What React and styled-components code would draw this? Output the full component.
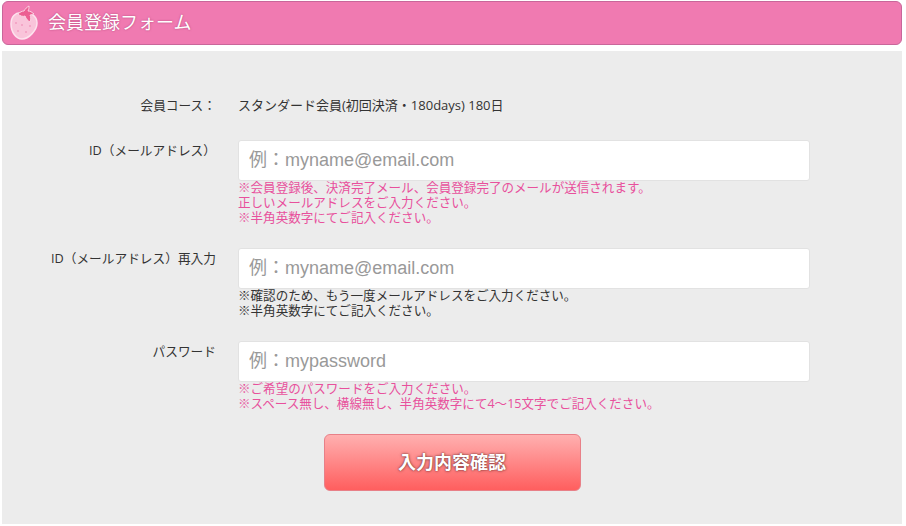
import React from "react";
import styled, { createGlobalStyle } from "styled-components";

const Global = createGlobalStyle`
  html, body { margin: 0; padding: 0; background: #fff; }
  body { font-family: "Open Sans", "Noto Sans CJK JP", sans-serif; color: #333; }
  * { box-sizing: border-box; }
`;

const Page = styled.div`
  width: 906px;
  height: 526px;
  padding: 1px 4px 0 2px;
  overflow: hidden;
`;

const Header = styled.h1`
  display: flex;
  align-items: center;
  gap: 8px;
  height: 44px;
  margin: 0;
  padding-left: 5px;
  background: #f07ab1;
  border: 1px solid #c9669a;
  border-radius: 6px;
  color: #fff;
  font-size: 18px;
  font-weight: 400;
  text-shadow: 0 0 2px rgba(130, 30, 80, 0.6);
`;

const Title = styled.span`
  padding-bottom: 4px;
`;

const Panel = styled.div`
  margin-top: 6px;
  height: 473px;
  padding-top: 45px;
  background: #ececec;
`;

const Row = styled.div`
  display: grid;
  grid-template-columns: 214px 572px;
  column-gap: 22px;
  margin-bottom: ${(p) => p.$gap}px;
`;

const Label = styled.div`
  font-size: 12.7px;
  line-height: 18px;
  text-align: right;
  padding-top: ${(p) => p.$top || 0}px;
`;

const Value = styled.div`
  font-size: 13px;
  line-height: 18px;
`;

const Input = styled.input`
  display: block;
  width: 572px;
  height: 41px;
  padding: 0 10px;
  background: #fff;
  border: 1px solid #e2e2e2;
  border-radius: 3px;
  outline: none;
  font-family: "Liberation Sans", "Noto Sans CJK JP", sans-serif;
  font-size: 18px;
  &::placeholder { color: #999; opacity: 1; }
`;

const Hint = styled.div`
  margin-top: -1px;
  font-size: 12.55px;
  line-height: 15px;
  color: ${(p) => (p.$dark ? "#333" : "#e8509c")};
`;

const Actions = styled.div`
  display: flex;
  justify-content: center;
`;

const Submit = styled.button`
  width: 257px;
  height: 57px;
  padding: 0 0 3px;
  background: linear-gradient(#ffb0b0, #ff5e5e);
  border: 1px solid #e88088;
  border-radius: 6px;
  color: #fff;
  font-family: "Noto Sans CJK JP", sans-serif;
  font-size: 18px;
  font-weight: 700;
  text-shadow: 0 0 3px #7a3535, 0 0 1px #7a3535;
`;

const Strawberry = () => (
  <svg width="32" height="36" viewBox="0 0 32 36">
    <path d="M14 8C7 7 3 12 3 19c0 8 5 15 11 15 7 0 15-9 15-16 0-7-7-12-15-10z" fill="#f9c4da" stroke="#fde3ee" strokeWidth="1.5" />
    <path d="M10 9c2-2 4-3 6-3 1-2 3-4 5-5 0 2 0 3-1 5 2 0 4 1 6 3-2 0-3 1-4 1 1 2 1 4 0 7-2-1-4-3-5-6-2 1-5 0-7-2z" fill="#ec5f92" stroke="#fbd3e3" strokeWidth="1" />
    <g fill="#f29cc0">
      <circle cx="8" cy="18" r="1" />
      <circle cx="14" cy="20" r="1" />
      <circle cx="22" cy="21" r="1" />
      <circle cx="10" cy="26" r="1" />
      <circle cx="18" cy="27" r="1" />
    </g>
  </svg>
);

export default function App() {
  return (
    <Page>
      <Global />
      <Header>
        <Strawberry />
        <Title>会員登録フォーム</Title>
      </Header>
      <Panel>
        <Row $gap={26}>
          <Label>会員コース：</Label>
          <Value>スタンダード会員(初回決済・180days) 180日</Value>
        </Row>
        <Row $gap={23}>
          <Label $top={1}>ID（メールアドレス）</Label>
          <div>
            <Input placeholder="例：myname@email.com" />
            <Hint>
              ※会員登録後、決済完了メール、会員登録完了のメールが送信されます。
              <br />
              正しいメールアドレスをご入力ください。
              <br />
              ※半角英数字にてご記入ください。
            </Hint>
          </div>
        </Row>
        <Row $gap={23}>
          <Label $top={1}>ID（メールアドレス）再入力</Label>
          <div>
            <Input placeholder="例：myname@email.com" />
            <Hint $dark>
              ※確認のため、もう一度メールアドレスをご入力ください。
              <br />
              ※半角英数字にてご記入ください。
            </Hint>
          </div>
        </Row>
        <Row $gap={23}>
          <Label $top={1}>パスワード</Label>
          <div>
            <Input placeholder="例：mypassword" />
            <Hint>
              ※ご希望のパスワードをご入力ください。
              <br />
              ※スペース無し、横線無し、半角英数字にて4～15文字でご記入ください。
            </Hint>
          </div>
        </Row>
        <Actions>
          <Submit>入力内容確認</Submit>
        </Actions>
      </Panel>
    </Page>
  );
}
